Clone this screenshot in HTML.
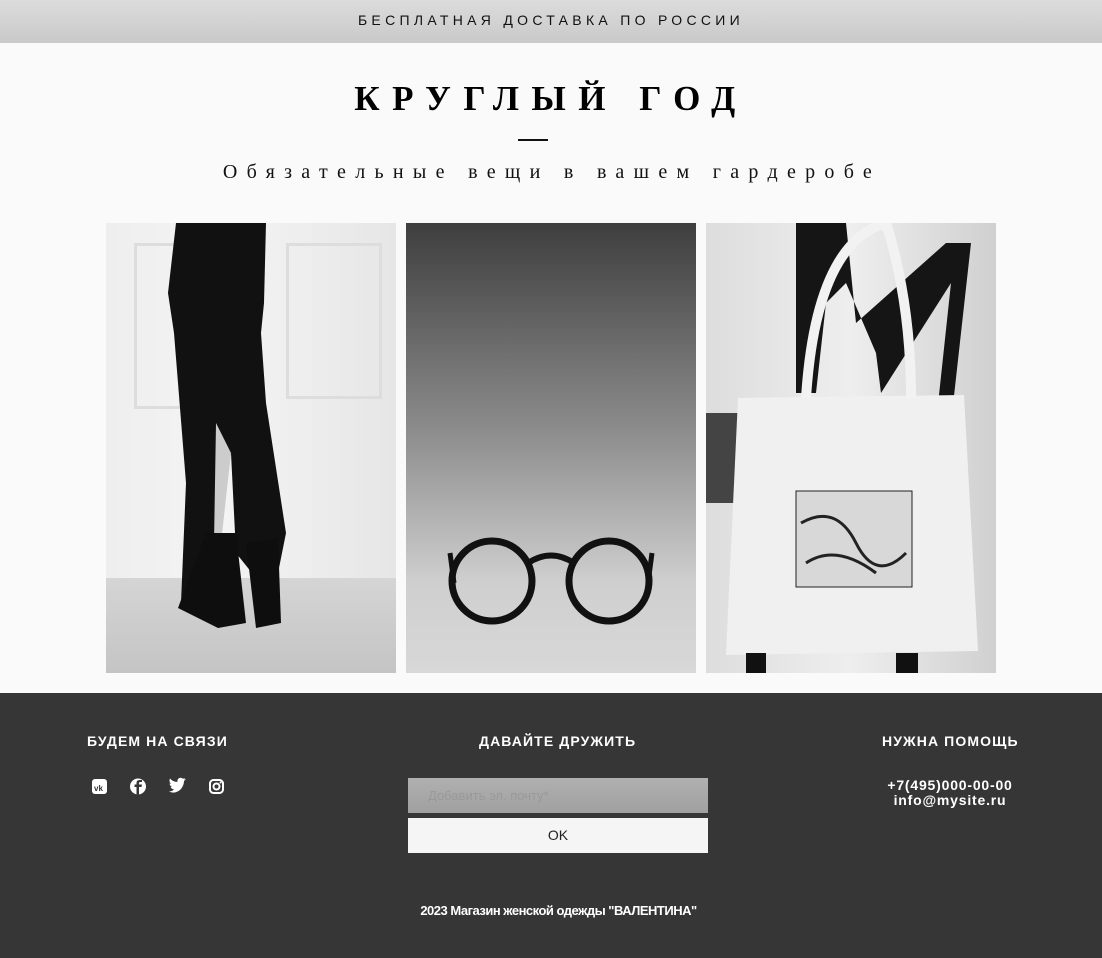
<!DOCTYPE html>
<html><head><meta charset="utf-8"><style>
body{margin:0;width:1102px;height:958px;background:#fafafa;font-family:"Liberation Sans",sans-serif;overflow:hidden;position:relative}
.top{height:43px;background:linear-gradient(#dcdcdc,#c9c9c9);text-align:center;line-height:40px;font-size:14px;letter-spacing:4.3px;color:#111}
h1{position:absolute;top:79px;left:0;width:1102px;margin:0;text-align:center;font-family:"Liberation Serif",serif;font-size:35px;letter-spacing:12.5px;font-weight:bold;box-sizing:border-box}
.line{position:absolute;left:518px;top:139px;width:30px;height:2px;background:#111}
.sub{position:absolute;top:161px;left:0;width:1102px;text-align:center;font-family:"Liberation Serif",serif;font-size:20px;letter-spacing:9.3px;padding-left:2px;box-sizing:border-box;color:#111}
.img{position:absolute;top:223px;width:290px;height:450px;overflow:hidden}
.foot{position:absolute;top:693px;left:0;width:1102px;height:265px;background:#363636;color:#fff}
.h{position:absolute;top:40px;font-size:14px;letter-spacing:1.1px;font-weight:bold}
</style></head><body>
<div class="top">БЕСПЛАТНАЯ ДОСТАВКА ПО РОССИИ</div>
<h1>КРУГЛЫЙ ГОД</h1>
<div class="line"></div>
<div class="sub">Обязательные вещи в вашем гардеробе</div>

<div class="img" style="left:106px;background:linear-gradient(90deg,#eee,#f4f4f4 40%,#e6e6e6)">
<div style="position:absolute;left:0;top:355px;width:290px;height:95px;background:linear-gradient(#d5d5d5,#c4c4c4)"></div>
<div style="position:absolute;left:28px;top:20px;width:95px;height:160px;border:3px solid #ddd"></div>
<div style="position:absolute;left:180px;top:20px;width:90px;height:150px;border:3px solid #ddd"></div>
<svg width="290" height="450" style="position:absolute;left:0;top:0"><path d="M70 0 L160 0 L158 80 L155 110 L160 180 L180 310 L172 350 L150 355 L130 330 L125 230 L110 330 L100 380 L75 380 L80 260 L68 110 L62 70 Z" fill="#111"/><path d="M110 200 L125 230 L115 320 L108 320 Z" fill="#ccc"/><path d="M100 310 L130 310 L140 400 L112 405 L72 385 Z" fill="#0e0e0e"/><path d="M140 320 L172 315 L175 400 L150 405 Z" fill="#0e0e0e"/></svg>
</div>

<div class="img" style="left:406px;background:linear-gradient(#3e3e3e,#8a8a8a 45%,#cfcfcf 80%,#d8d8d8)">
<svg width="290" height="450" style="position:absolute;left:0;top:0"><circle cx="86" cy="358" r="40" fill="none" stroke="#111" stroke-width="7"/><circle cx="203" cy="358" r="40" fill="none" stroke="#111" stroke-width="7"/><path d="M122 340 Q145 325 168 340" fill="none" stroke="#111" stroke-width="6"/><path d="M44 330 L48 360 M246 330 L242 360" stroke="#111" stroke-width="5"/></svg>
</div>

<div class="img" style="left:706px;background:linear-gradient(90deg,#ddd,#eee 50%,#d0d0d0)">
<svg width="290" height="450" style="position:absolute;left:0;top:0"><path d="M90 0 L140 0 L150 100 L240 20 L265 20 L245 200 L230 200 L245 60 L175 170 L170 130 L140 60 L120 80 L110 170 L90 170 Z" fill="#151515"/><rect x="0" y="190" width="60" height="90" fill="#444"/><path d="M32 175 L258 172 L272 428 L20 432 Z" fill="#f0f0f0"/><path d="M100 175 Q110 20 180 0 Q205 80 205 175" fill="none" stroke="#f2f2f2" stroke-width="10"/><rect x="90" y="268" width="116" height="96" fill="#d8d8d8" stroke="#222"/><path d="M95 300 Q130 280 150 320 T200 330 M100 340 Q130 320 170 350" fill="none" stroke="#222" stroke-width="3"/><rect x="190" y="430" width="22" height="20" fill="#111"/><rect x="40" y="430" width="20" height="20" fill="#111"/></svg>
</div>

<div class="foot">
<div class="h" style="left:87px">БУДЕМ НА СВЯЗИ</div>
<div class="h" style="left:479px">ДАВАЙТЕ ДРУЖИТЬ</div>
<div class="h" style="left:882px">НУЖНА ПОМОЩЬ</div>
<svg width="140" height="20" style="position:absolute;left:90px;top:84px">
<rect x="2" y="2" width="15" height="15" rx="3" fill="#fff"/><text x="4" y="14" font-size="8" font-family="Liberation Sans" font-weight="bold" fill="#363636">vk</text>
<circle cx="48" cy="9.5" r="8" fill="#fff"/><path d="M49 18 V10 H51.5 L52 7.5 H49 V6 Q49 5 50 5 H52 V3 H49.5 Q46.5 3 46.5 6 V7.5 H44.5 V10 H46.5 V18 Z" fill="#363636"/>
<path d="M80 15 Q86 17 91 12 Q94 8 94 4 L96 2 L94 2.5 L95 1 L93 1.8 Q90 -0.5 88 2 Q87 4 87.5 5 Q83 5 80 1.5 Q78.5 4.5 81 7 L79.5 6.5 Q80 9 82 10 L80.5 10 Q81.5 12 84 12.5 Q82 14.5 79 14.5 Z" fill="#fff"/>
<rect x="120" y="3" width="13" height="13" rx="3.5" fill="none" stroke="#fff" stroke-width="2"/><circle cx="126.5" cy="9.5" r="3" fill="none" stroke="#fff" stroke-width="2"/><circle cx="130.5" cy="5.5" r="1" fill="#fff"/>
</svg>
<div style="position:absolute;left:408px;top:85px;width:300px;height:35px;background:linear-gradient(#b0b0b0,#a0a0a0);color:#999;font-size:13px;line-height:35px;padding-left:20px;box-sizing:border-box">Добавить эл. почту*</div>
<div style="position:absolute;left:408px;top:125px;width:300px;height:35px;background:#f5f5f5;color:#222;font-size:14px;line-height:35px;text-align:center">OK</div>
<div style="position:absolute;left:880px;top:85px;width:140px;text-align:center;font-size:14px;font-weight:bold;letter-spacing:0.8px;line-height:15px">+7(495)000-00-00<br>info@mysite.ru</div>
<div style="position:absolute;left:0;top:210px;width:1117px;text-align:center;font-size:13px;font-weight:bold;letter-spacing:-0.5px">2023 Магазин женской одежды "ВАЛЕНТИНА"</div>
</div>
</body></html>
